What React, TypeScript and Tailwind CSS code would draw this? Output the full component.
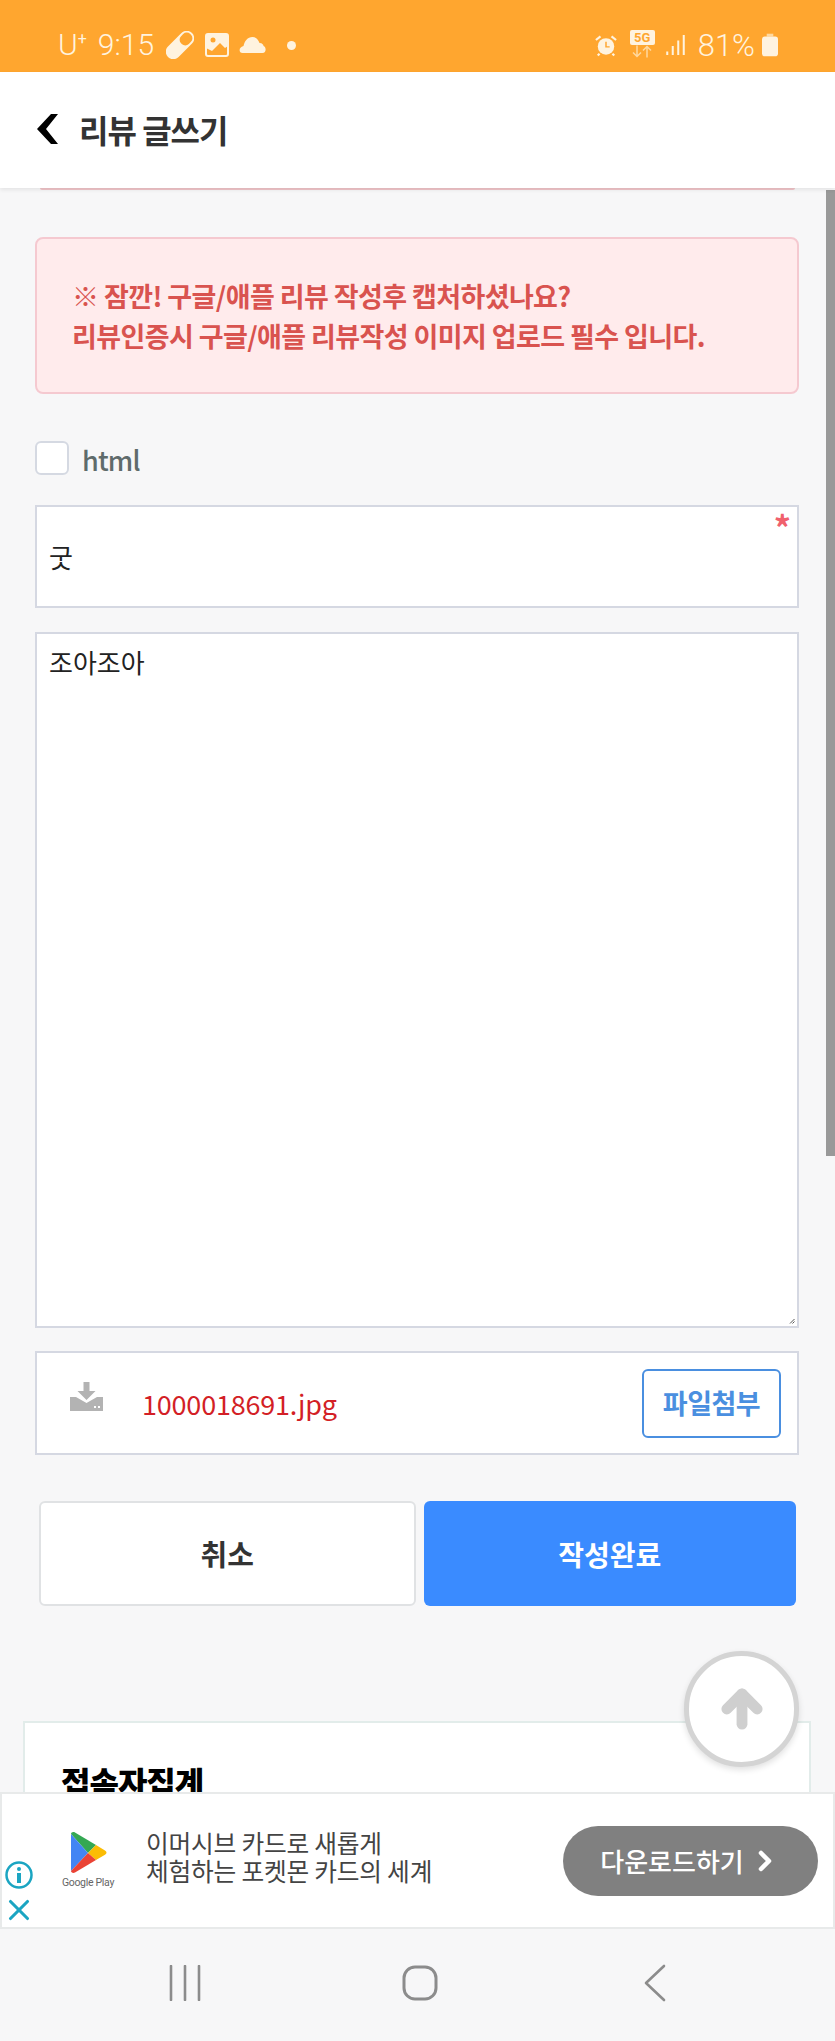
import { ArrowUp, ChevronRight, X } from "lucide-react";

const kr = "font-['Noto_Sans_CJK_KR','Noto_Sans',sans-serif]";

function StatusLeft() {
  return (
    <div className="flex items-center">
      <span className="text-[30px] font-light leading-none text-[#fff3df] font-['Roboto',sans-serif]">U</span>
      <span className="mb-3 text-[16px] leading-none text-[#fff3df] font-['Roboto',sans-serif]">+</span>
      <span className="ml-[11px] text-[30px] font-light leading-none text-[#fff3df] font-['Roboto',sans-serif]">9:15</span>
      <svg className="ml-[12px]" width="28" height="28" viewBox="0 0 28 28">
        <g transform="rotate(-45 14 14)">
          <rect x="-3" y="6.500" width="34" height="15" rx="7.500" fill="#fff3df" />
          <rect x="16" y="8.500" width="13" height="11" rx="5" fill="#ffa62f" />
        </g>
      </svg>
      <svg className="ml-[11px]" width="24" height="24" viewBox="0 0 24 24">
        <rect x="1" y="1" width="22" height="22" rx="2" fill="none" stroke="#fff3df" strokeWidth="2" />
        <path d="M1 1h22v12l-3 2-5-5-8 8-6-3z" fill="#fff3df" />
        <circle cx="8" cy="7" r="2.500" fill="#ffa62f" />
      </svg>
      <svg className="ml-[9px]" width="29" height="18" viewBox="0 0 28 18">
        <path d="M4 17c-4 0-4-6 1-7 1-5 4-9 9-9 4 0 6 3 7 6 3 0 4 2 4 3 3 1 3 7-1 7z" fill="#fff3df" />
      </svg>
      <span className="ml-[20px] h-[9px] w-[9px] rounded-full bg-[#fff3df]" />
    </div>
  );
}

function StatusRight() {
  return (
    <div className="flex items-center">
      <svg width="22" height="23" viewBox="0 0 24 24">
        <circle cx="12" cy="13" r="9" fill="#fff3df" />
        <path d="M12 8v5.500h4" fill="none" stroke="#ffa62f" strokeWidth="1.600" />
        <path d="M1 6l5-4M23 6l-5-4M5 21l-2 2M19 21l2 2" stroke="#fff3df" strokeWidth="2.400" />
      </svg>
      <div className="ml-[13px] -mt-[2px] flex w-[25px] flex-col items-center">
        <span className="w-full rounded-[2px] bg-[#fff3df] text-center text-[13px] font-bold leading-[15px] text-[#ffa62f] font-['Roboto',sans-serif]">5G</span>
        <svg width="24" height="13" viewBox="0 0 24 12">
          <path d="M7 0v11M3 7l4 4 4-4" fill="none" stroke="#ffd9a0" strokeWidth="1.500" />
          <path d="M17 12V1M13 5l4-4 4 4" fill="none" stroke="#ffd9a0" strokeWidth="1.500" />
        </svg>
      </div>
      <svg className="ml-[10px]" width="21" height="22" viewBox="0 0 21 24">
        <path d="M1.500 19v4M7.500 13v10M13.500 7v16M19.500 1v22" stroke="#fff3df" strokeWidth="2.200" />
      </svg>
      <span className="ml-[12px] text-[31px] font-light leading-none text-[#fff3df] font-['Roboto',sans-serif]">81%</span>
      <svg className="ml-[7px]" width="16" height="24" viewBox="0 0 17 24">
        <path d="M5 0h7v3H5z" fill="#ffd9a0" />
        <rect x="0" y="3" width="17" height="21" rx="3" fill="#fff3df" />
      </svg>
    </div>
  );
}

function PlayLogo() {
  return (
    <svg width="37" height="41" viewBox="0 0 37 41">
      <path d="M1 2C1 .5 3 -.5 5 .5L26 13 18 21z" fill="#34a853" />
      <path d="M1 2v37l17-18z" fill="#4285f4" />
      <path d="M26 13l9 5.500c2 1.200 2 3 0 4.200L26 28l-8-7z" fill="#fbbc04" />
      <path d="M1 39c0 1.500 2 2.500 4 1.500L26 28l-8-7z" fill="#ea4335" />
    </svg>
  );
}

function DownloadIcon() {
  return (
    <svg width="33" height="29" viewBox="0 0 33 29">
      <path d="M13.500 0h6v9h6l-9 9-9-9h6z" fill="#b3b3b3" />
      <path d="M0 15h6l10.500 6 10.500-6h6v14H0z" fill="#b3b3b3" />
      <rect x="24" y="24" width="2" height="2" fill="#fff" />
      <rect x="28" y="24" width="2" height="2" fill="#fff" />
    </svg>
  );
}

export default function App() {
  return (
    <div className={`relative flex h-[2041px] w-[835px] flex-col overflow-hidden bg-[#f7f7f8] ${kr}`}>
      <div className="flex h-[72px] items-center justify-between bg-[#ffa62f] pl-[58px] pr-[57px] pt-[18px]">
        <StatusLeft />
        <StatusRight />
      </div>

      <header className="z-10 flex h-[116px] items-center bg-white pb-[2px] pl-[37px] shadow-[0_2px_4px_rgba(0,0,0,0.08)]">
        <svg width="22" height="30" viewBox="0 0 22 30">
          <path d="M14 0h7L9 15l12 15h-7L0 15z" fill="#000" />
        </svg>
        <h1 className="ml-[20px] text-[32px] font-bold leading-none tracking-[-1px] text-[#333]">리뷰 글쓰기</h1>
      </header>

      <main className="relative min-h-0 flex-1 overflow-hidden">
        <div className="mx-[40px] h-[2px] rounded-b bg-[#f0c4c8]" />

        <div className="ml-[35px] mr-[36px] mt-[47px] flex h-[157px] flex-col justify-center rounded-lg border-2 border-[#f5c9d0] bg-[#ffebec] pl-[35px] text-[27px] font-bold leading-[40px] tracking-[-0.6px] text-[#d9534f]">
          <p>※ 잠깐! 구글/애플 리뷰 작성후 캡처하셨나요?</p>
          <p>리뷰인증시 구글/애플 리뷰작성 이미지 업로드 필수 입니다.</p>
        </div>

        <div className="ml-[35px] mt-[47px] flex items-center">
          <span className="h-[34px] w-[34px] rounded-md border-2 border-[#d5d9e2] bg-white" />
          <span className="ml-[13px] mt-[3px] text-[27px] font-medium leading-none tracking-[-0.8px] text-[#5f6b6b]">html</span>
        </div>

        <div className="relative ml-[35px] mr-[36px] mt-[30px] flex h-[103px] items-center border-2 border-[#d5d8e2] bg-white pl-[12px] text-[26px] text-[#222]">
          굿
          <span className="absolute right-[6px] top-[3px] text-[34px] font-bold leading-none text-[#f0616d]">*</span>
        </div>

        <div className="relative ml-[35px] mr-[36px] mt-[24px] h-[696px] border-2 border-[#d5d8e2] bg-white pl-[12px] pt-[10px] text-[26px] leading-[35px] text-[#222]">
          조아조아
          <svg className="absolute bottom-[2px] right-[2px]" width="6" height="6" viewBox="0 0 6 6">
            <path d="M5.500 1L1 5.500M5.500 3.500L3.500 5.500" stroke="#555" strokeWidth="1" />
          </svg>
        </div>

        <div className="ml-[35px] mr-[36px] mt-[23px] flex h-[104px] items-center border-2 border-[#d5d8e2] bg-white pl-[33px] pr-[16px]">
          <div className="-mt-[13px]">
            <DownloadIcon />
          </div>
          <span className="ml-[39px] text-[27px] leading-none tracking-[-0.2px] text-[#d31f26]">1000018691.jpg</span>
          <button className="ml-auto h-[69px] w-[139px] rounded-md border-2 border-[#4a8fe0] bg-white text-[27px] font-bold tracking-[-0.5px] text-[#4a8fe0]">파일첨부</button>
        </div>

        <div className="ml-[39px] mr-[39px] mt-[46px] flex h-[105px] gap-[8px]">
          <button className="flex-1 rounded-md border-2 border-[#e0e2e4] bg-white text-[29px] font-bold text-[#333]">취소</button>
          <button className="flex-1 rounded-md bg-[#3a8bff] text-[28px] font-bold text-white">작성완료</button>
        </div>

        <section className="ml-[23px] mr-[24px] mt-[115px] h-[200px] border-2 border-[#e2ecea] bg-white pl-[36px] pt-[42px]">
          <h2 className="text-[32px] font-black leading-none tracking-[-1px] text-black">접속자집계</h2>
        </section>

        <div className="absolute right-0 top-[2px] h-[966px] w-[9px] bg-[#999]" />

        <button className="absolute left-[684px] top-[1463px] flex h-[116px] w-[115px] items-center justify-center rounded-full border-[5px] border-[#d4d4d4] bg-white shadow-[0_3px_6px_rgba(0,0,0,0.12)]">
          <ArrowUp className="h-[52px] w-[52px] text-[#cfcfcf]" strokeWidth={5} />
        </button>
      </main>

      <aside className="z-10 flex h-[137px] items-center border-2 border-[#e8eaea] bg-white">
        <div className="flex h-full w-[34px] flex-col items-center justify-end text-[#1ba5c2]">
          <svg width="30" height="30" viewBox="0 0 30 30" className="shrink-0">
            <circle cx="15" cy="15" r="12.500" fill="none" stroke="#1ba5c2" strokeWidth="2.500" />
            <circle cx="15" cy="9" r="2" fill="#1ba5c2" />
            <rect x="13" y="13" width="4" height="10" fill="#1ba5c2" />
          </svg>
          <X className="mt-[3px] h-[34px] w-[34px] shrink-0" strokeWidth={2.2} />
        </div>
        <div className="ml-[8px] mr-[14px] flex w-[88px] shrink-0 flex-col items-center">
          <PlayLogo />
          <span className="mt-[5px] whitespace-nowrap text-[10.500px] leading-none tracking-[-0.3px] text-[#666] font-['Roboto',sans-serif]">Google Play</span>
        </div>
        <div className="-mt-[10px] text-[24.700px] leading-[28px] tracking-[-0.2px] text-[#444]">
          <p>이머시브 카드로 새롭게</p>
          <p>체험하는 포켓몬 카드의 세계</p>
        </div>
        <button className="ml-auto mr-[15px] flex h-[70px] w-[255px] items-center justify-center rounded-full bg-[#808080] text-[26px] font-medium text-white">
          다운로드하기
          <ChevronRight className="ml-[5px] h-[32px] w-[32px]" strokeWidth={3.4} />
        </button>
      </aside>

      <nav className="flex h-[112px] items-center pb-[5px] pl-[168px]">
        <svg width="34" height="36" viewBox="0 0 34 36">
          <path d="M3 1v34M17 1v34M31 1v34" stroke="#8c8c8c" strokeWidth="2.600" strokeLinecap="round" />
        </svg>
        <svg className="ml-[200px]" width="36" height="36" viewBox="0 0 36 36">
          <rect x="2" y="2" width="32" height="32" rx="11" fill="none" stroke="#8c8c8c" strokeWidth="3" />
        </svg>
        <svg className="ml-[205px]" width="24" height="38" viewBox="0 0 24 38">
          <path d="M21 2L3 19l18 17" fill="none" stroke="#8c8c8c" strokeWidth="2.600" strokeLinecap="round" strokeLinejoin="round" />
        </svg>
      </nav>
    </div>
  );
}
